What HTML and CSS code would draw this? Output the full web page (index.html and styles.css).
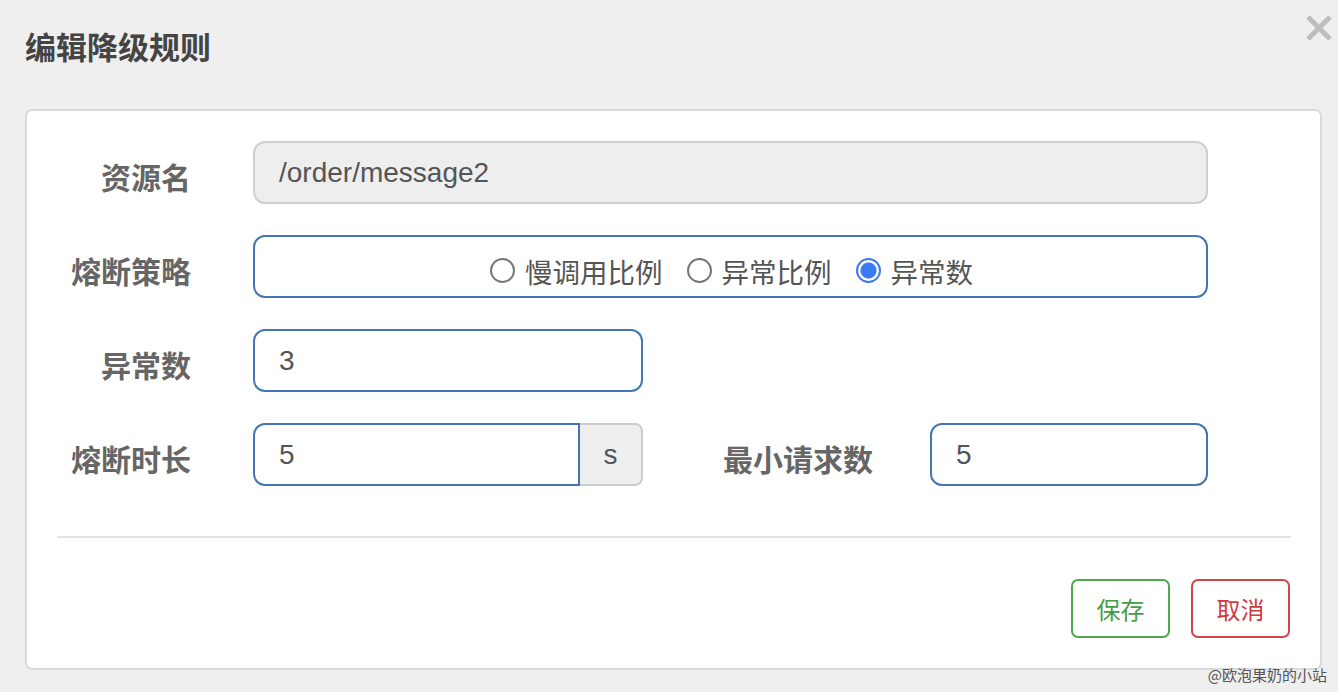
FILE: index.html
```html
<!DOCTYPE html>
<html lang="zh">
<head>
<meta charset="utf-8">
<title>编辑降级规则</title>
<link rel="stylesheet" href="styles.css">
</head>
<body>
<div class="modal">
  <div class="modal-header">
    <h4 class="modal-title">编辑降级规则</h4>
    <button class="close" type="button" aria-label="close">
      <svg width="28" height="28" viewBox="0 0 28 28"><path d="M3 3 L25 25 M25 3 L3 25" stroke="#bdbdbd" stroke-width="5" stroke-linecap="butt" fill="none"/></svg>
    </button>
  </div>
  <div class="card">
    <div class="form">
      <div class="row">
        <label class="label">资源名</label>
        <div class="field input readonly">/order/message2</div>
      </div>
      <div class="row">
        <label class="label">熔断策略</label>
        <div class="field radio-box">
          <label class="radio"><span class="dot"></span>慢调用比例</label>
          <label class="radio"><span class="dot"></span>异常比例</label>
          <label class="radio"><span class="dot checked"></span>异常数</label>
        </div>
      </div>
      <div class="row">
        <label class="label">异常数</label>
        <div class="input active short">3</div>
      </div>
      <div class="row">
        <label class="label">熔断时长</label>
        <div class="group">
          <div class="input active group-input">5</div>
          <div class="addon">s</div>
        </div>
        <label class="label label-wide">最小请求数</label>
        <div class="input active small">5</div>
      </div>
    </div>
    <div class="sep"></div>
    <div class="footer">
      <button class="btn btn-save" type="button">保存</button>
      <button class="btn btn-cancel" type="button">取消</button>
    </div>
  </div>
  <div class="watermark">@欧泡果奶的小站</div>
</div>
</body>
</html>
```

FILE: styles.css
```css
* { box-sizing: border-box; }
html, body { margin: 0; padding: 0; }
body {
  background: #efefef;
  font-family: "Liberation Sans", "Noto Sans CJK SC", sans-serif;
  width: 1338px;
  height: 692px;
  overflow: hidden;
}
.modal { position: relative; width: 1338px; height: 692px; }
.modal-header {
  height: 109px;
  display: flex;
  justify-content: space-between;
  align-items: flex-start;
  padding: 0 5px 0 25px;
}
.modal-title {
  margin: 25px 0 0;
  font-size: 31px;
  line-height: 42px;
  font-weight: bold;
  color: #444;
  font-family: "Noto Sans CJK SC", sans-serif;
}
.close {
  margin-top: 14px;
  padding: 0;
  border: 0;
  background: none;
  width: 28px;
  height: 28px;
}
.close svg { display: block; }
.card {
  margin: 0 16px 0 25px;
  height: 561px;
  background: #fff;
  border: 2px solid #dadada;
  border-radius: 7px;
  padding: 30px 30px 30px 30px;
}
.form { display: flex; flex-direction: column; gap: 31px; }
.row { display: flex; align-items: flex-start; height: 63px; }
.label {
  width: 134px;
  flex: none;
  text-align: right;
  font-family: "Noto Sans CJK SC", sans-serif;
  font-weight: bold;
  font-size: 30px;
  line-height: 55px;
  padding-top: 8px;
  color: #666;
  margin-right: 62px;
}
.label-wide { width: 230px; margin-right: 57px; }
.input {
  height: 63px;
  border: 2px solid #ccc;
  border-radius: 12px;
  padding: 0 24px;
  font-size: 28px;
  line-height: 59px;
  color: #555;
}
.field { width: 955px; flex: none; }
.readonly { background: #eee; border-color: #cfcfcf; }
.active { border-color: #4576b4; background: #fff; }
.short { width: 390px; }
.small { width: 278px; }
.radio-box {
  height: 63px;
  border: 2px solid #4576b4;
  border-radius: 12px;
  display: flex;
  justify-content: center;
  align-items: center;
  gap: 24px;
  padding-top: 8px;
  padding-left: 2px;
}
.radio {
  display: flex;
  align-items: center;
  gap: 10px;
  font-family: "Noto Sans CJK SC", sans-serif;
  font-size: 27.5px;
  line-height: 40px;
  color: #555;
}
.dot {
  width: 25px;
  height: 25px;
  border-radius: 50%;
  border: 2px solid #767676;
  background: #fff;
  flex: none;
}
.dot.checked {
  border: 2px solid #3a7af2;
  background: radial-gradient(circle, #3a7af2 0 7.5px, #fff 8.5px);
}
.group { display: flex; width: 390px; flex: none; }
.group-input {
  width: 327px;
  border-radius: 12px 0 0 12px;
}
.addon {
  width: 63px;
  height: 63px;
  background: #eee;
  border: 2px solid #ccc;
  border-left: 0;
  border-radius: 0 8px 8px 0;
  text-align: center;
  font-size: 28px;
  line-height: 59px;
  color: #555;
}
.sep {
  margin-top: 50px;
  height: 2px;
  background: #e3e3e3;
  margin-right: 0;
  width: 1234px;
}
.footer {
  margin-top: 41px;
  display: flex;
  justify-content: flex-end;
  gap: 21px;
}
.btn {
  width: 99px;
  height: 59px;
  background: #fff;
  border: 2px solid;
  border-radius: 7px;
  font-family: "Noto Sans CJK SC", sans-serif;
  font-size: 24px;
  padding: 0;
}
.btn-save { border-color: #4fa84f; color: #479c47; }
.btn-cancel { border-color: #d4454a; color: #cf3b3f; }
.watermark {
  position: absolute;
  right: 11px;
  bottom: 7px;
  font-family: "Noto Sans CJK SC", sans-serif;
  font-size: 15px;
  line-height: 20px;
  color: #555;
}
```
